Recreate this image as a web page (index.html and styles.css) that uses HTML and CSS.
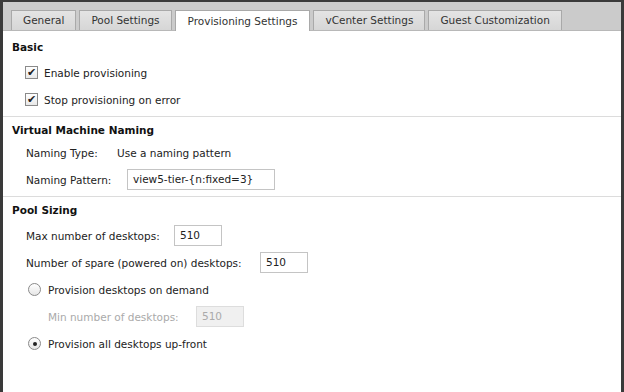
FILE: index.html
```html
<!DOCTYPE html>
<html lang="en">
<head>
    <meta charset="UTF-8">
    <title>Provisioning Settings</title>
    <link rel="stylesheet" href="styles.css">
</head>
<body>
    <div class="frame">
        <div class="tabs">
            <div class="tab">General</div>
            <div class="tab">Pool Settings</div>
            <div class="tab active">Provisioning Settings</div>
            <div class="tab">vCenter Settings</div>
            <div class="tab">Guest Customization</div>
        </div>

        <div class="panel">
            <div class="section basic">
                <h2>Basic</h2>
                <label class="row check-row"><span class="check">&#10004;</span>Enable provisioning</label>
                <label class="row check-row"><span class="check">&#10004;</span>Stop provisioning on error</label>
            </div>

            <div class="section naming">
                <h2>Virtual Machine Naming</h2>
                <div class="row">
                    <span class="label type-label">Naming Type:</span>
                    <span>Use a naming pattern</span>
                </div>
                <div class="row">
                    <span class="label pattern-label">Naming Pattern:</span>
                    <span class="box wide">view5-tier-{n:fixed=3}</span>
                </div>
            </div>

            <div class="section last">
                <h2>Pool Sizing</h2>
                <div class="row">
                    <span class="label max-label">Max number of desktops:</span>
                    <span class="box">510</span>
                </div>
                <div class="row">
                    <span class="label spare-label">Number of spare (powered on) desktops:</span>
                    <span class="box">510</span>
                </div>
                <div class="row radio-row">
                    <span class="radio"></span>Provision desktops on demand
                </div>
                <div class="row sub disabled">
                    <span class="label max-label">Min number of desktops:</span>
                    <span class="box">510</span>
                </div>
                <div class="row radio-row">
                    <span class="radio on"></span>Provision all desktops up-front
                </div>
            </div>
        </div>
    </div>
</body>
</html>
```

FILE: styles.css
```css
* {
    margin: 0;
    padding: 0;
    box-sizing: border-box;
}

body {
    background: #fff;
    font-family: "DejaVu Sans", Verdana, sans-serif;
    font-size: 10.5px;
    color: #222;
}

.frame {
    width: 624px;
    height: 392px;
    border-top: 2px solid #3a3a3a;
    border-left: 3px solid #3a3a3a;
    border-right: 3px solid #3a3a3a;
    overflow: hidden;
}

/* tab strip */
.tabs {
    display: flex;
    gap: 3px;
    padding: 8px 0 0 8px;
    background: #cbcbcb;
    border-bottom: 1px solid #b8b8b8;
    height: 29px;
}

.tab {
    padding: 0 11px;
    height: 20px;
    line-height: 19px;
    background: linear-gradient(#e4e4e4, #d6d6d6);
    border: 1px solid #a9a9a9;
    border-bottom: none;
    color: #333;
}

.tab.active {
    background: #fff;
    height: 21px;
    padding: 0 12px;
    line-height: 21px;
    margin-bottom: -1px;
}

/* sections */
.section {
    border-bottom: 1px solid #dcdcdc;
    padding: 7px 9px 3px;
}

.section.basic {
    padding-top: 10px;
}

.section.last {
    border-bottom: none;
}

h2 {
    font-size: 10.5px;
    line-height: 12px;
    font-weight: bold;
    color: #111;
    margin-bottom: 6px;
}

.naming h2 {
    margin-bottom: 3px;
}

.row {
    display: flex;
    align-items: center;
    padding-left: 14px;
    height: 27px;
}

.check-row {
    padding-left: 13px;
}

.check {
    width: 13px;
    height: 13px;
    border: 1px solid #8a8a8a;
    background: linear-gradient(#fff, #e8e8e8);
    font-size: 11px;
    line-height: 11px;
    text-align: center;
    color: #222;
    margin-right: 6px;
}

.type-label {
    width: 91px;
}

.pattern-label {
    width: 101px;
}

.max-label {
    width: 148px;
}

.spare-label {
    width: 234px;
}

.box {
    border: 1px solid #c4c4c4;
    height: 21px;
    line-height: 19px;
    padding: 0 5px;
    width: 48px;
    background: #fff;
}

.box.wide {
    width: 148px;
}

.radio-row {
    padding-left: 16px;
}

.radio {
    width: 13px;
    height: 13px;
    border: 1px solid #8a8a8a;
    border-radius: 50%;
    background: linear-gradient(#fff, #e6e6e6);
    margin-right: 7px;
    display: flex;
    align-items: center;
    justify-content: center;
}

.radio.on::after {
    content: "";
    width: 4px;
    height: 4px;
    border-radius: 50%;
    background: #222;
}

.sub {
    padding-left: 36px;
}

.disabled {
    color: #aaa;
}

.disabled .box {
    background: #f0f0f0;
    border-color: #ddd;
}
```
